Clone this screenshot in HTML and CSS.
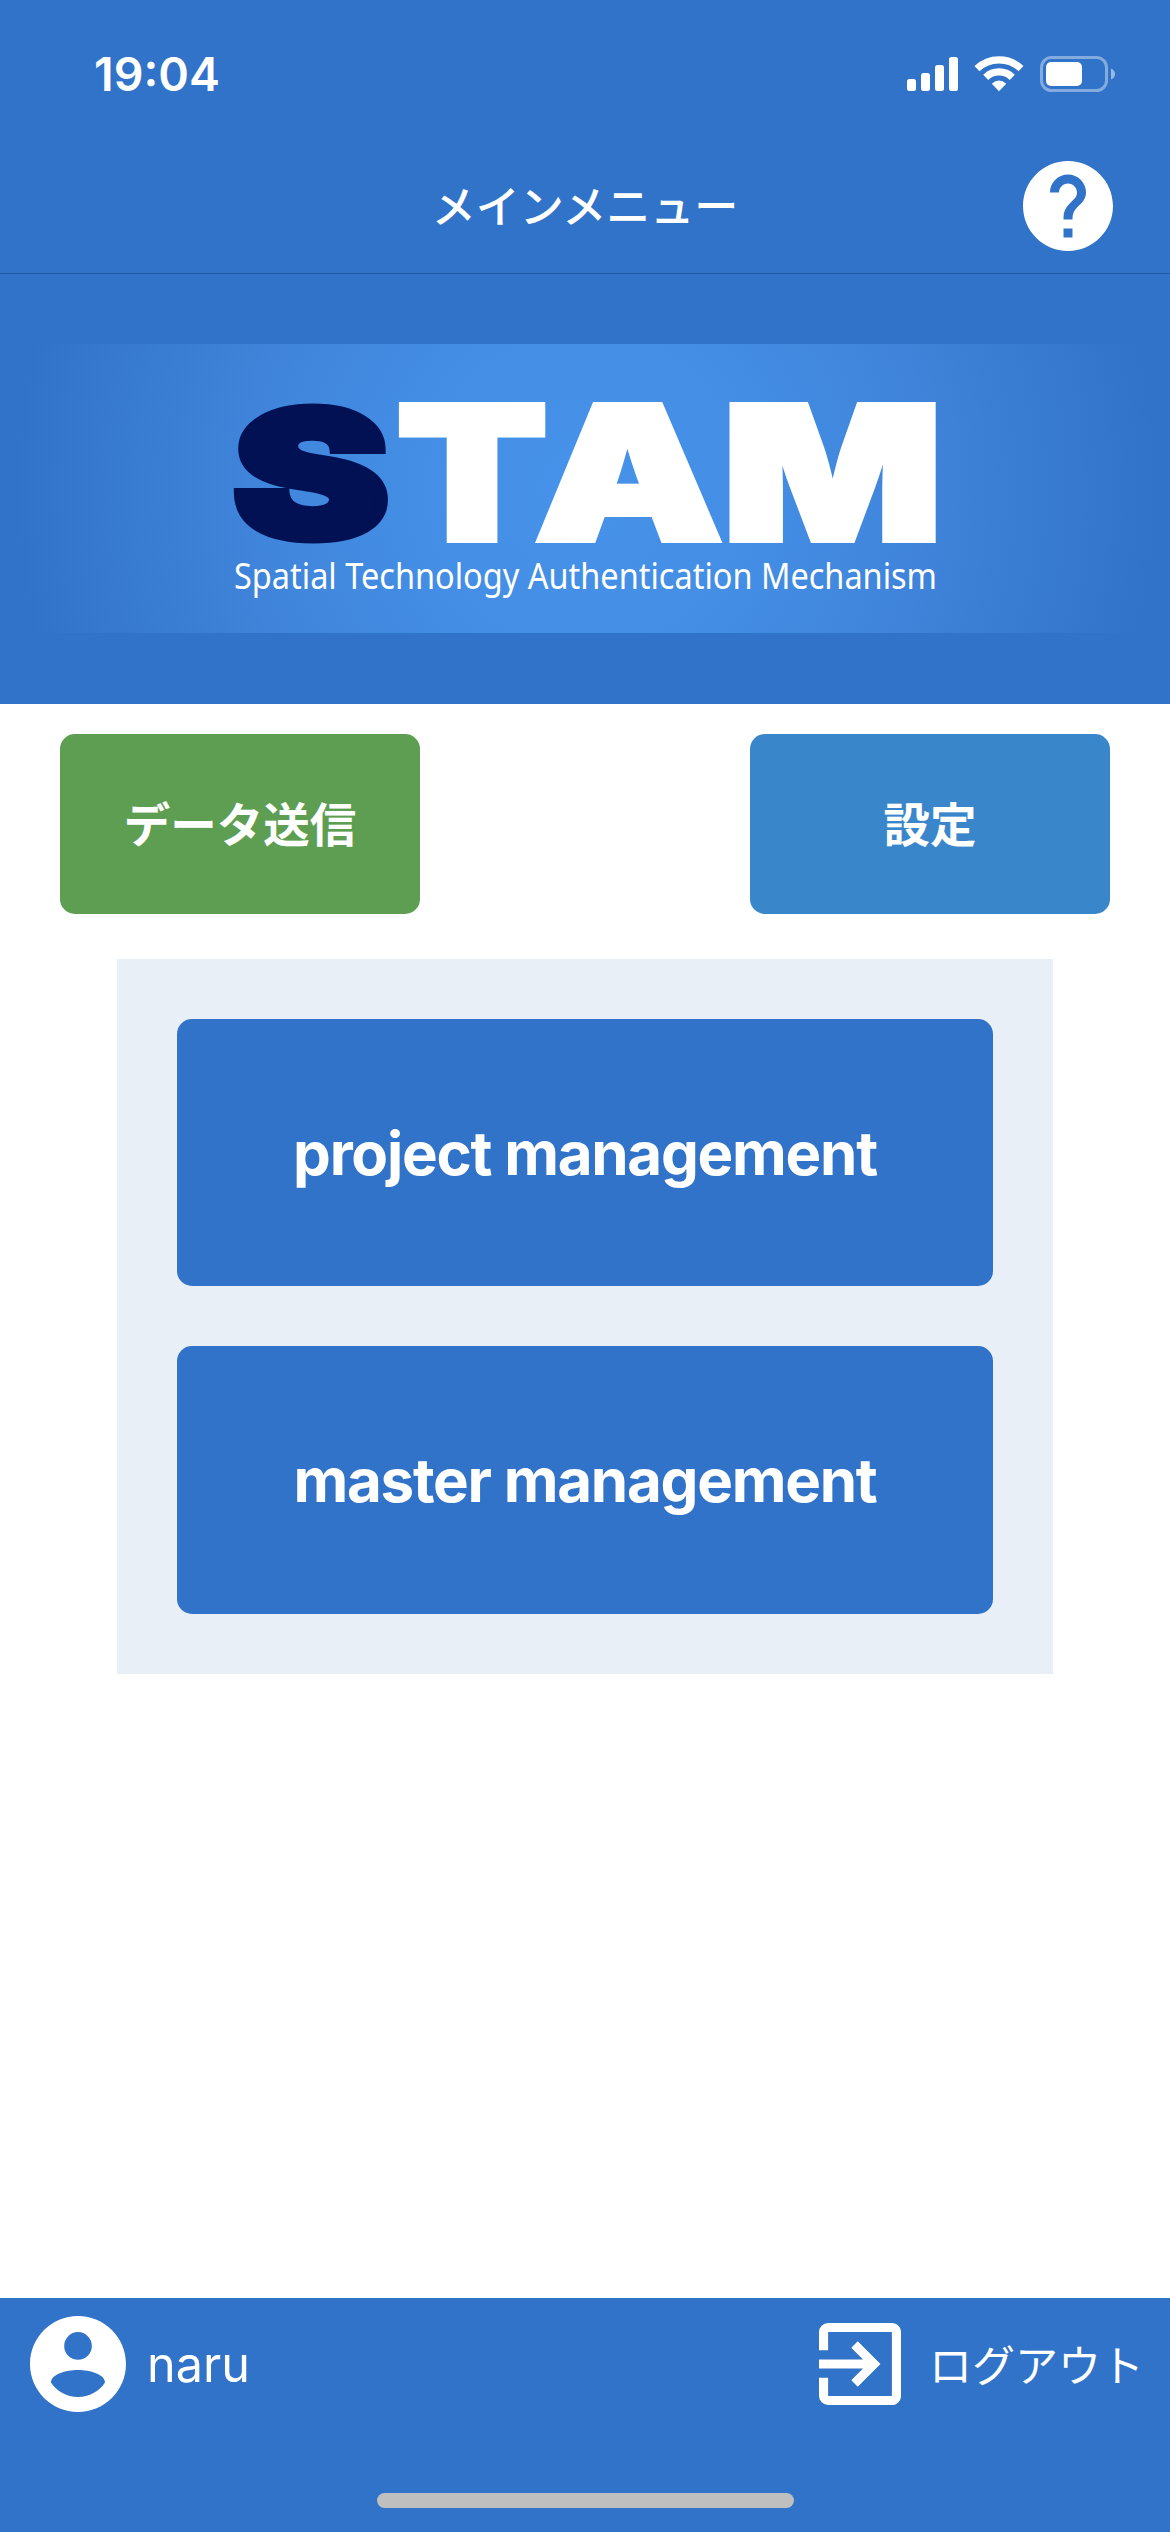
FILE: index.html
```html
<!DOCTYPE html>
<html lang="ja">
<head>
<meta charset="utf-8">
<title>メインメニュー</title>
<link rel="stylesheet" href="styles.css">
</head>
<body>
<div class="screen">
  <div class="status-bar">
    <span class="clock">19:04</span>
    <svg class="status-icons" width="210" height="40" viewBox="906 54 210 40">
      <g fill="#fff">
        <rect x="907" y="79" width="9" height="12" rx="2.5"/>
        <rect x="921" y="73" width="9" height="18" rx="2.5"/>
        <rect x="935" y="65" width="9" height="26" rx="2.5"/>
        <rect x="949" y="57" width="9" height="34" rx="2.5"/>
        <path d="M999 91.300L991.800 83.700Q999 77.500 1006.200 83.700Z"/>
        <rect x="1046" y="62" width="36" height="24" rx="5"/>
      </g>
      <g fill="none" stroke="#fff" stroke-width="7.200">
        <path d="M977 68.600A32 32 0 0 1 1021 68.600"/>
        <path d="M985.700 77.300A19.200 19.200 0 0 1 1012.300 77.300"/>
      </g>
      <rect x="1041.500" y="57.500" width="65" height="33" rx="10" fill="none" stroke="#fff" stroke-opacity=".4" stroke-width="3"/>
      <path d="M1111 68.500Q1115 70 1115 74T1111 79.500Z" fill="#fff" fill-opacity=".5"/>
    </svg>
  </div>
  <header class="nav-bar">
    <h1 class="nav-title">メインメニュー</h1>
    <svg class="help" viewBox="0 0 24 24"><path fill="#fff" d="M12 2C6.480 2 2 6.480 2 12s4.480 10 10 10 10-4.480 10-10S17.520 2 12 2zm1 17h-2v-2h2v2zm2.070-7.750l-.9.920C13.450 12.900 13 13.500 13 15h-2v-.5c0-1.100.45-2.100 1.170-2.830l1.240-1.260c.37-.36.59-.86.59-1.410 0-1.100-.9-2-2-2s-2 .9-2 2H8c0-2.210 1.790-4 4-4s4 1.790 4 4c0 .88-.36 1.680-.93 2.250z"/></svg>
  </header>
  <div class="hero">
    <div class="banner">
      <svg width="1170" height="289" viewBox="0 344 1170 289">
        <g class="wordmark">
          <text class="wordmark-lead" transform="scale(1.333 1)" x="174.900" y="537">S</text>
          <text transform="scale(1.190 1)" x="333.300" y="540.500">T</text>
          <text transform="scale(1.275 1)" x="419.600" y="540.500">A</text>
          <text transform="scale(1.245 1)" x="580.300" y="540.500">M</text>
        </g>
        <text class="tagline" x="234" y="589" textLength="703" lengthAdjust="spacingAndGlyphs">Spatial Technology Authentication Mechanism</text>
      </svg>
    </div>
  </div>
  <main class="content">
    <div class="actions">
      <button class="btn btn-send">データ送信</button>
      <button class="btn btn-settings">設定</button>
    </div>
    <div class="panel">
      <button class="btn btn-main">project management</button>
      <button class="btn btn-main">master management</button>
    </div>
  </main>
  <footer class="footer">
    <div class="footer-row">
      <div class="user">
        <svg class="avatar" viewBox="2 2 20 20"><path fill="#fff" d="M12 2C6.480 2 2 6.480 2 12s4.480 10 10 10 10-4.480 10-10S17.520 2 12 2zm0 3.350a2.880 2.880 0 1 1 0 5.760 2.880 2.880 0 0 1 0-5.760zm0 13.550c-2.340 0-4.410-1.200-5.630-3.030.03-1.740 3.080-2.620 5.630-2.620s5.600.88 5.630 2.620C16.410 17.700 14.340 18.900 12 18.900z"/></svg>
        <span class="user-name">naru</span>
      </div>
      <div class="logout">
        <svg class="exit" viewBox="3 3 18 18"><path fill="#fff" d="M10.090 15.590L11.500 17l5-5-5-5-1.410 1.410L12.670 11H3v2h9.670l-2.580 2.590zM19 3H5a2 2 0 0 0-2 2v4h2V5h14v14H5v-4H3v4a2 2 0 0 0 2 2h14c1.100 0 2-.9 2-2V5c0-1.100-.9-2-2-2z"/></svg>
        <span class="logout-label">ログアウト</span>
      </div>
    </div>
    <div class="home-indicator"></div>
  </footer>
</div>
</body>
</html>
```
FILE: styles.css
```css
* { box-sizing: border-box; }
body {
  margin: 0;
  background: #fff;
  color: #fff;
  font-family: Inter, "Noto Sans CJK JP", sans-serif;
}
svg { display: block; flex: none; }
.screen {
  width: 1170px;
  height: 2532px;
  display: flex;
  flex-direction: column;
}
.status-bar {
  height: 141px;
  padding: 7px 54px 0 94px;
  background: #3173c8;
  display: flex;
  align-items: center;
  justify-content: space-between;
}
.clock {
  font-size: 46.5px;
  font-weight: 600;
  line-height: 56px;
}
.nav-bar {
  height: 133px;
  padding: 0 48px 2px;
  background: #3173c8;
  border-bottom: 1px solid #225ba3;
  display: grid;
  grid-template-columns: 108px 1fr 108px;
  align-items: center;
}
.nav-title {
  grid-column: 2;
  margin: 0;
  padding-bottom: 5px;
  text-align: center;
  font-family: "Noto Sans CJK JP", sans-serif;
  font-size: 44px;
  font-weight: 500;
  line-height: 60px;
}
.help { width: 108px; height: 108px; }
.hero {
  height: 430px;
  padding-top: 70px;
  background: #3173c8;
}
.banner {
  height: 289px;
  background: radial-gradient(circle 570px at 585px 145px, #4792ea 0%, #448ee5 30%, #3f84da 60%, #3173c8 100%);
}
.wordmark {
  font-family: Inter, sans-serif;
  font-size: 185px;
  font-weight: 900;
  fill: #fff;
  stroke: #fff;
  stroke-width: 6px;
}
.wordmark-lead {
  font-size: 175px;
  fill: #021054;
  stroke: #021054;
  stroke-width: 9px;
}
.tagline {
  font-family: "Noto Sans", sans-serif;
  font-size: 36px;
  fill: #fff;
}
.content { flex: 1; }
.actions {
  padding: 30px 60px 0;
  display: flex;
  justify-content: space-between;
}
.btn {
  border: 0;
  padding: 0;
  border-radius: 15px;
  color: #fff;
  font-family: Inter, "Noto Sans CJK JP", sans-serif;
  display: flex;
  align-items: center;
  justify-content: center;
}
.btn-send, .btn-settings {
  width: 360px;
  height: 180px;
  padding-bottom: 6px;
  font-family: "Noto Sans CJK JP", sans-serif;
  font-size: 46.5px;
  font-weight: 700;
}
.btn-send { background: #5d9e52; }
.btn-settings { background: #3a86cb; }
.panel {
  margin: 45px 117px 0;
  padding: 60px;
  background: #e8eff7;
  display: grid;
  grid-template-rows: 267px 268px;
  gap: 60px;
}
.btn-main {
  background: #3173c8;
  font-size: 60px;
  font-weight: 700;
  letter-spacing: -1.25px;
}
.footer {
  height: 234px;
  padding: 18px 30px 24px;
  background: #3173c8;
  display: flex;
  flex-direction: column;
  justify-content: space-between;
}
.footer-row, .user, .logout { display: flex; align-items: center; }
.footer-row { height: 96px; justify-content: space-between; }
.avatar { width: 96px; height: 96px; }
.user-name {
  margin-left: 21px;
  padding-top: 2px;
  font-size: 48.5px;
  line-height: 60px;
}
.exit { width: 82px; height: 82px; }
.logout-label {
  margin-left: 28px;
  margin-right: -4px;
  padding-bottom: 3px;
  font-family: "Noto Sans CJK JP", sans-serif;
  font-size: 43px;
  line-height: 60px;
}
.home-indicator {
  width: 417px;
  height: 15px;
  border-radius: 8px;
  background: #bfbfbf;
  align-self: center;
}
```
